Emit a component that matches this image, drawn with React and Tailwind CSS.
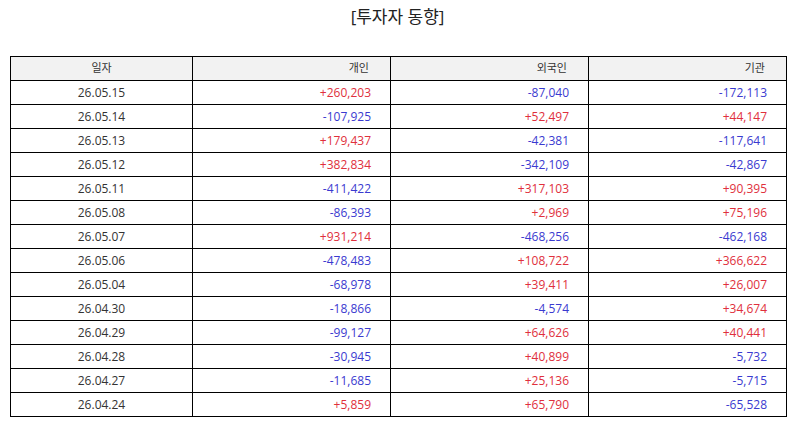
import React from "react";

const rows = [
  ["26.05.15", "+260,203", "-87,040", "-172,113"],
  ["26.05.14", "-107,925", "+52,497", "+44,147"],
  ["26.05.13", "+179,437", "-42,381", "-117,641"],
  ["26.05.12", "+382,834", "-342,109", "-42,867"],
  ["26.05.11", "-411,422", "+317,103", "+90,395"],
  ["26.05.08", "-86,393", "+2,969", "+75,196"],
  ["26.05.07", "+931,214", "-468,256", "-462,168"],
  ["26.05.06", "-478,483", "+108,722", "+366,622"],
  ["26.05.04", "-68,978", "+39,411", "+26,007"],
  ["26.04.30", "-18,866", "-4,574", "+34,674"],
  ["26.04.29", "-99,127", "+64,626", "+40,441"],
  ["26.04.28", "-30,945", "+40,899", "-5,732"],
  ["26.04.27", "-11,685", "+25,136", "-5,715"],
  ["26.04.24", "+5,859", "+65,790", "-65,528"],
];

function Num({ v }) {
  const pos = v.startsWith("+");
  return (
    <td
      className={`border border-black h-[24px] pr-[19px] text-right ${
        pos ? "text-[#e0303c]" : "text-[#3a3ad0]"
      }`}
    >
      {v}
    </td>
  );
}

export default function App() {
  return (
    <div
      className="w-[795px] h-[425px] bg-white overflow-hidden"
      style={{ fontFamily: '"Open Sans", "Noto Sans CJK KR", sans-serif' }}
    >
      <div className="pt-[5px] h-[56px] text-center text-[17px] leading-[24px] text-[#222]">
        [투자자 동향]
      </div>
      <table className="ml-[10px] w-[776px] border-collapse table-fixed text-[12px] text-[#333]">
        <colgroup>
          <col className="w-[182px]" />
          <col className="w-[198px]" />
          <col className="w-[198px]" />
          <col className="w-[198px]" />
        </colgroup>
        <thead>
          <tr className="bg-[#f2f2f2] text-[11px]">
            <th className="border border-black h-[24px] font-normal text-center">일자</th>
            <th className="border border-black h-[24px] font-normal text-right pr-[21px]">개인</th>
            <th className="border border-black h-[24px] font-normal text-right pr-[21px]">외국인</th>
            <th className="border border-black h-[24px] font-normal text-right pr-[21px]">기관</th>
          </tr>
        </thead>
        <tbody>
          {rows.map((r) => (
            <tr key={r[0]}>
              <td className="border border-black h-[24px] text-center">{r[0]}</td>
              <Num v={r[1]} />
              <Num v={r[2]} />
              <Num v={r[3]} />
            </tr>
          ))}
        </tbody>
      </table>
    </div>
  );
}
